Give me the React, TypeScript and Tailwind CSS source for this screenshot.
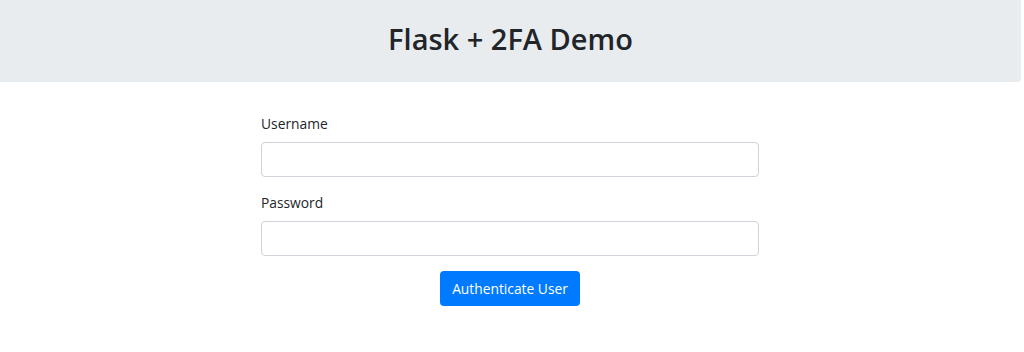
export default function App() {
  return (
    <div className="w-[1021px] bg-white text-[#212529] font-['Open_Sans',sans-serif] text-[13.8px] leading-[22px]">
      <header className="h-[82px] bg-[#e9ecef] rounded-br-[4px] flex items-center justify-center">
        <h1 className="text-[29px] font-semibold leading-[1.2] mt-[-3px]">Flask + 2FA Demo</h1>
      </header>
      <form className="w-[498px] ml-[261px] pt-[31px] flex flex-col">
        <div className="mb-[15px]">
          <label className="block mb-[7px]">Username</label>
          <input className="block w-full h-[35px] border border-[#ced4da] rounded-[4px] px-3 outline-none" />
        </div>
        <div className="mb-[15px]">
          <label className="block mb-[7px]">Password</label>
          <input type="password" className="block w-full h-[35px] border border-[#ced4da] rounded-[4px] px-3 outline-none" />
        </div>
        <div className="flex justify-center">
          <button type="button" className="h-[35px] w-[140px] bg-[#007bff] text-white rounded-[4px]">Authenticate User</button>
        </div>
      </form>
    </div>
  );
}
